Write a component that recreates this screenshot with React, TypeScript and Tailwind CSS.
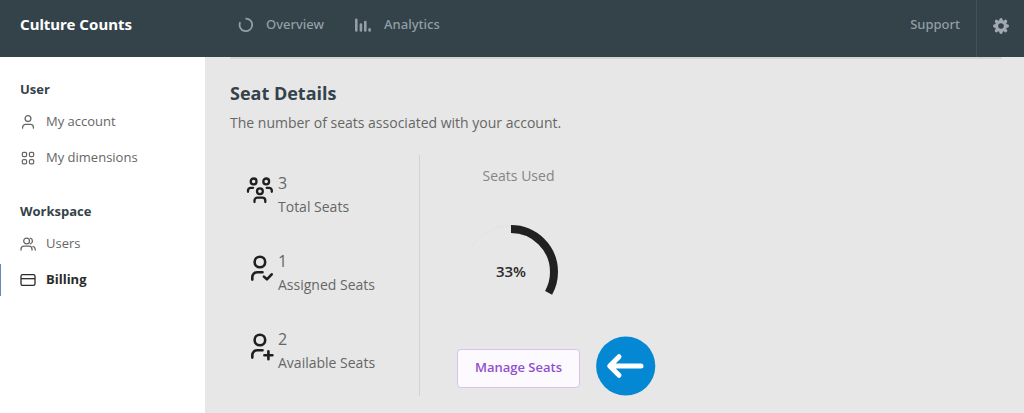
import type { ReactNode } from 'react';

const SEATS_USED = 33;

function UserIcon() {
  return (
    <svg className="w-4 h-4" viewBox="0 0 16 16" fill="none" stroke="currentColor" strokeWidth="1.3" strokeLinecap="round">
      <circle cx="8" cy="4.6" r="2.9" />
      <path d="M2.6 14.2v-.9a3 3 0 0 1 3-3h4.8a3 3 0 0 1 3 3v.9" />
    </svg>
  );
}

function DimensionsIcon() {
  return (
    <svg className="w-4 h-4" viewBox="0 0 16 16" fill="none" stroke="currentColor" strokeWidth="1.2">
      <rect x="2.3" y="2.3" width="4.3" height="4.3" rx="1.3" />
      <rect x="9.4" y="2.3" width="4.3" height="4.3" rx="1.3" />
      <rect x="2.3" y="9.6" width="4.3" height="4.3" rx="1.3" />
      <rect x="9.4" y="9.6" width="4.3" height="4.3" rx="1.3" />
    </svg>
  );
}

function UsersIcon() {
  return (
    <svg className="w-4 h-4" viewBox="0 0 16 16" fill="none" stroke="currentColor" strokeWidth="1.3" strokeLinecap="round">
      <circle cx="6.6" cy="5" r="2.9" />
      <path d="M1 14v-.8a3 3 0 0 1 3-3h5a3 3 0 0 1 3 3v.8" />
      <path d="M10.3 2.2a2.9 2.9 0 0 1 0 5.6M13 10.4a3 3 0 0 1 2.2 2.8v.8" />
    </svg>
  );
}

function CardIcon() {
  return (
    <svg className="w-4 h-4" viewBox="0 0 16 16" fill="none" stroke="currentColor" strokeWidth="1.3">
      <rect x="1" y="2.6" width="14" height="10.8" rx="1.6" />
      <path d="M1 6.7h14" />
    </svg>
  );
}

function OverviewIcon() {
  return (
    <svg className="w-4 h-4" viewBox="0 0 16 16" fill="none" stroke="currentColor" strokeWidth="1.8">
      <path d="M7.4 1.6A6.3 6.3 0 1 1 2.2 5.2" />
    </svg>
  );
}

function AnalyticsIcon() {
  return (
    <svg className="w-[18px] h-4" viewBox="0 0 18 16" fill="none" stroke="currentColor" strokeWidth="2.6" strokeLinecap="round">
      <path d="M2.3 2.8v10.7M6.9 7.6v5.9M11.3 5v8.5M15.6 12.4v1" />
    </svg>
  );
}

function GearIcon() {
  return (
    <svg className="w-4 h-4" viewBox="0 0 16 16">
      <circle cx="8" cy="8" r="4.4" fill="none" stroke="currentColor" strokeWidth="3.2" />
      <g stroke="currentColor" strokeWidth="3.4" strokeLinecap="round">
        <path d="M8 1.7v1M8 13.3v1M1.7 8h1M13.3 8h1M3.4 3.4l.6.6M12 12l.6.6M3.4 12.6l.6-.6M12 4l.6-.6" />
      </g>
    </svg>
  );
}

function TotalSeatsIcon() {
  return (
    <svg className="w-7 h-7" viewBox="0 0 28 28" fill="none" stroke="currentColor" strokeWidth="2.3" strokeLinecap="round">
      <circle cx="7.6" cy="4.4" r="2.9" />
      <circle cx="20.2" cy="4.4" r="2.9" />
      <circle cx="13.9" cy="14.2" r="2.9" />
      <path d="M2 14.8v-1.3a2.7 2.7 0 0 1 2.7-2.7h2.4M25.8 14.8v-1.3a2.7 2.7 0 0 0-2.7-2.7h-2.4" />
      <path d="M8.5 25v-1.4a2.9 2.9 0 0 1 2.9-2.9h5a2.9 2.9 0 0 1 2.9 2.9V25" />
    </svg>
  );
}

function AssignedSeatsIcon() {
  return (
    <svg className="w-7 h-7" viewBox="0 0 28 28" fill="none" stroke="currentColor" strokeWidth="2.6" strokeLinecap="round" strokeLinejoin="round">
      <circle cx="13.9" cy="7" r="5.3" />
      <path d="M6.3 24.6v-2.4a5 5 0 0 1 5-5h5.2" />
      <path d="M17.9 21.6l3 2.7 4.8-5" />
    </svg>
  );
}

function AvailableSeatsIcon() {
  return (
    <svg className="w-7 h-7" viewBox="0 0 28 28" fill="none" stroke="currentColor" strokeWidth="2.6" strokeLinecap="round">
      <circle cx="13.9" cy="7" r="5.3" />
      <path d="M6.3 24.6v-2.4a5 5 0 0 1 5-5h5.2" />
      <path d="M18.4 22.2h8M22.4 18.2v8" />
    </svg>
  );
}

function SidebarLink({ icon, label, active = false }: { icon: ReactNode; label: string; active?: boolean }) {
  return (
    <li className="relative">
      {active && <span className="absolute left-0 inset-y-0.5 w-px bg-[#6f83bd]" />}
      <a
        href="#"
        className={`flex items-center gap-2.5 h-9 pl-5 text-[13px] ${active ? 'font-bold text-[#2b2b2b]' : 'text-[#666666]'}`}
      >
        {icon}
        {label}
      </a>
    </li>
  );
}

function Stat({ icon, value, label }: { icon: ReactNode; value: number; label: string }) {
  return (
    <div className="flex gap-1">
      <div className="pt-1.5 text-[#1f1f1f]">{icon}</div>
      <div className="text-[#666666]">
        <p className="text-base leading-6">{value}</p>
        <p className="text-sm leading-6">{label}</p>
      </div>
    </div>
  );
}

function SeatsDonut() {
  const radius = 43;
  const length = 2 * Math.PI * radius;
  return (
    <svg className="w-[108px] h-[108px]" viewBox="0 0 108 108" role="img" aria-label="Seats used">
      <path d="M14.5 29.5A46.5 46.5 0 0 1 54 7.5" fill="none" stroke="#dfdfdf" strokeWidth="0.6" />
      <circle
        cx="54"
        cy="54"
        r={radius}
        fill="none"
        stroke="#212121"
        strokeWidth="8"
        strokeDasharray={`${(length * SEATS_USED) / 100} ${length}`}
        transform="rotate(-90 54 54)"
      />
      <text x="54" y="59" textAnchor="middle" className="text-[15px] font-semibold fill-[#2b2b2b]">
        {SEATS_USED}%
      </text>
    </svg>
  );
}

export default function App() {
  return (
    <div className="min-h-screen flex flex-col bg-[#e7e7e7] font-['Open_Sans','Noto_Sans',sans-serif]">
      <header className="flex items-stretch h-[57px] bg-[#34424a] font-['Noto_Sans','Open_Sans',sans-serif] text-[13px] font-medium text-[#939ea5]">
        <div className="w-[205px] shrink-0 flex items-center pl-5 pb-2 text-[15px] font-bold text-white">Culture Counts</div>
        <nav className="flex-1 flex items-center gap-[30px] pl-[33px] pb-2">
          <a href="#" className="flex items-center gap-3">
            <OverviewIcon />
            Overview
          </a>
          <a href="#" className="flex items-center gap-3">
            <AnalyticsIcon />
            Analytics
          </a>
        </nav>
        <a href="#" className="flex items-center pb-2 pr-4">Support</a>
        <button aria-label="Settings" className="flex items-center justify-center w-12 pb-1.5 border-l border-[#46505a] text-[#a0a9b3]">
          <GearIcon />
        </button>
      </header>

      <div className="flex-1 flex">
        <aside className="w-[205px] shrink-0 pt-5 bg-white">
          <h2 className="mb-[3px] pl-5 text-[13px] leading-6 font-bold text-[#34424a]">User</h2>
          <ul className="mb-[23px]">
            <SidebarLink icon={<UserIcon />} label="My account" />
            <SidebarLink icon={<DimensionsIcon />} label="My dimensions" />
          </ul>
          <h2 className="mb-[3px] pl-5 text-[13px] leading-6 font-bold text-[#34424a]">Workspace</h2>
          <ul>
            <SidebarLink icon={<UsersIcon />} label="Users" />
            <SidebarLink icon={<CardIcon />} label="Billing" active />
          </ul>
        </aside>

        <main className="flex-1 pl-[25px] pr-[22px]">
          <div className="h-0.5 bg-[#d4d4d4]" />
          <h1 className="mt-5 text-lg leading-7 font-bold text-[#34424a]">Seat Details</h1>
          <p className="mt-1 text-sm leading-6 text-[#666666]">The number of seats associated with your account.</p>

          <div className="mt-5 flex">
            <div className="w-[190px] flex flex-col gap-[30px] pt-4 pl-4 border-r border-[#d3d3d3]">
              <Stat icon={<TotalSeatsIcon />} value={3} label="Total Seats" />
              <Stat icon={<AssignedSeatsIcon />} value={1} label="Assigned Seats" />
              <Stat icon={<AvailableSeatsIcon />} value={2} label="Available Seats" />
            </div>
            <div className="flex flex-col pl-[37px] pt-[9px]">
              <h3 className="w-[123px] text-center text-sm leading-6 text-[#858585]">Seats Used</h3>
              <div className="mt-[30px]">
                <SeatsDonut />
              </div>
              <div className="mt-2.5 flex items-center gap-4">
                <div className="pt-1">
                  <button className="block w-[123px] h-[39px] rounded border border-[#d9c2ee] bg-[#fcfaff] text-[13px] font-semibold text-[#9150cb]">
                    Manage Seats
                  </button>
                </div>
                <svg className="w-[60px] h-[60px]" viewBox="0 0 60 60" aria-hidden="true">
                  <circle cx="29.7" cy="30" r="29.6" fill="#0488d3" />
                  <path
                    d="M45 30H14M23 20.7L13.7 30l9.3 9.3"
                    fill="none"
                    stroke="#ffffff"
                    strokeWidth="5"
                    strokeLinecap="round"
                    strokeLinejoin="round"
                  />
                </svg>
              </div>
            </div>
          </div>
        </main>
      </div>
    </div>
  );
}
